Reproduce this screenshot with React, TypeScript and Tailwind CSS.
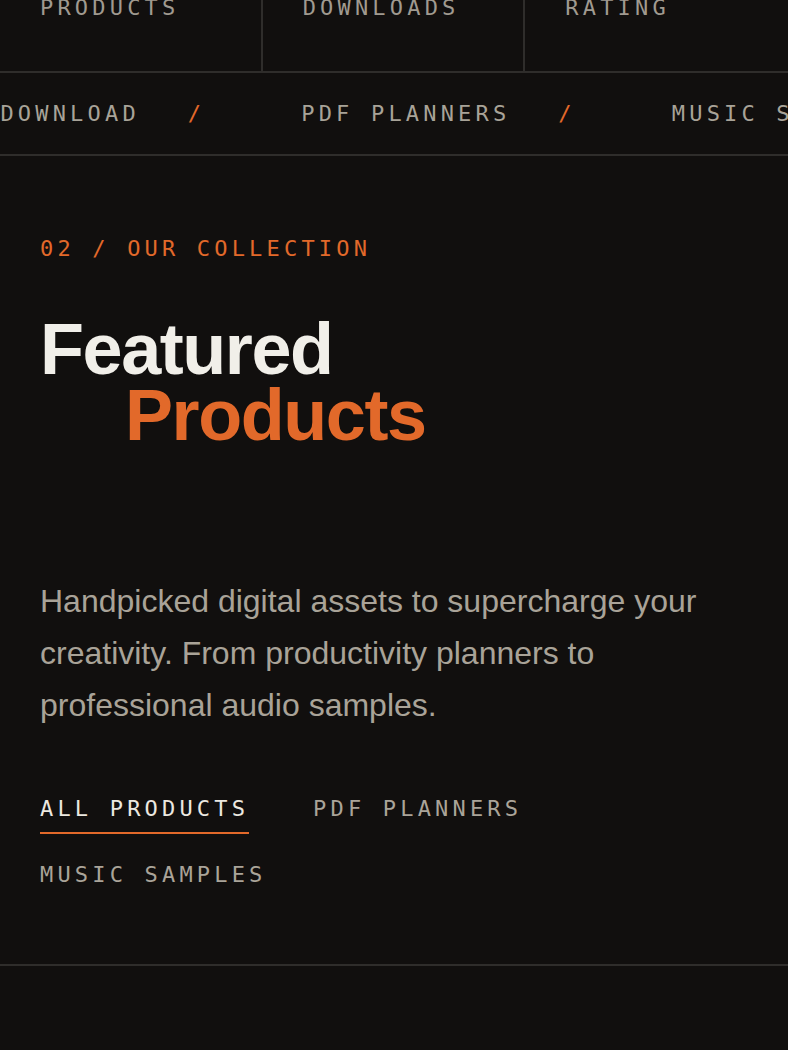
import React from "react";

const mono = "font-['DejaVu_Sans_Mono',monospace]";

const stats = ["PRODUCTS", "DOWNLOADS", "RATING"];
const ticker = ["INSTANT DOWNLOAD", "PDF PLANNERS", "MUSIC SAMPLES", "INSTANT DOWNLOAD"];
const tabs = ["ALL PRODUCTS", "PDF PLANNERS", "MUSIC SAMPLES"];

export default function App() {
  const active = "ALL PRODUCTS";

  return (
    <div className="min-h-[1050px] bg-[#110f0e] overflow-hidden">
      <div className="-mt-[9px]">
        {/* stats strip, scrolled mostly out of view */}
        <div className="grid grid-cols-3 border-b-2 border-[#2f2d2b]">
          {stats.map((s, i) => (
            <div
              key={s}
              className={`pl-10 pb-[47px] ${i < stats.length - 1 ? "border-r-2 border-[#2f2d2b]" : ""}`}
            >
              <span className={`${mono} block text-[22px] leading-[33px] tracking-[0.19em] text-[#a09a90]`}>
                {s}
              </span>
            </div>
          ))}
        </div>

        {/* ticker */}
        <div className="border-b-2 border-[#2f2d2b] py-6 overflow-hidden">
          <div
            className={`${mono} flex whitespace-nowrap text-[22px] leading-[33px] tracking-[0.19em] text-[#a8a398] gap-12 -ml-[139px]`}
          >
            {ticker.map((t, i) => (
              <React.Fragment key={i}>
                <span>{t}</span>
                <span className="text-[#e2692a] mr-12">/</span>
              </React.Fragment>
            ))}
          </div>
        </div>
      </div>

      {/* collection intro */}
      <section className="px-10 pt-[76px] pb-16 border-b-2 border-[#2f2d2b]">
        <p className={`${mono} text-[22px] leading-[33px] tracking-[0.19em] text-[#e2692a]`}>
          02 / OUR COLLECTION
        </p>

        <h2 className="mt-[51px] font-['Liberation_Sans',Arial,sans-serif] font-bold text-[72px] leading-[0.92] tracking-[-0.02em]">
          <span className="block text-[#f1efe9]">Featured</span>
          <span className="block pl-[85px] text-[#e2692a]">Products</span>
        </h2>

        <p className="mt-[127px] font-['Liberation_Sans',Arial,sans-serif] text-[32px] leading-[52px] text-[#a9a398]">
          Handpicked digital assets to supercharge your creativity. From productivity planners to
          professional audio samples.
        </p>

        <div className="mt-[61px] flex flex-wrap gap-x-16 gap-y-6">
          {tabs.map((t) => (
            <button
              key={t}
              className={`${mono} text-left text-[22px] leading-[33px] tracking-[0.19em] pb-[7px] border-b-2 ${
                t === active ? "text-[#ece8e0] border-[#e2692a]" : "text-[#aaa499] border-transparent"
              }`}
            >
              {t}
            </button>
          ))}
        </div>
      </section>
    </div>
  );
}
